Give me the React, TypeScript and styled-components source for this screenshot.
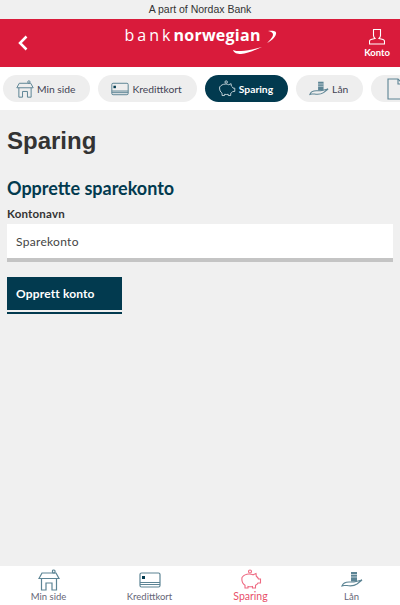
import React from "react";
import styled, { createGlobalStyle } from "styled-components";

const GlobalStyle = createGlobalStyle`
  html, body { margin: 0; padding: 0; height: 100%; background: #f0f0f0; }
  #root { height: 100%; }
  * { box-sizing: border-box; }
`;

const BODY_FONT = `Lato, "Noto Sans", sans-serif`;
const PETROL = "#023a4f";
const ICON = "#5c8494";

type IconProps = { color?: string; size?: number };

const HouseIcon = ({ color = ICON, size = 22 }: IconProps) => (
  <svg width={size} height={size} viewBox="0 0 22 22" fill="none" stroke={color} strokeWidth="1.2">
    <path d="M1 9.5 4 4h14l3 5.5z" />
    <path d="M3.5 9.5V21h4.5v-7h6v7h4.5V9.5" />
    <rect x="14.5" y="1" width="2.5" height="3" rx="1" />
  </svg>
);

const CardIcon = ({ color = ICON, size = 22 }: IconProps) => (
  <svg width={size} height={size} viewBox="0 0 22 22" fill="none" stroke={color} strokeWidth="1.2">
    <rect x="1" y="4" width="20" height="14" rx="1.5" />
    <path d="M1 13.5h20M1 15.5h20" />
    <rect x="3" y="7" width="3" height="3" fill={PETROL} stroke="none" />
  </svg>
);

const PiggyIcon = ({ color = ICON, size = 22 }: IconProps) => (
  <svg width={size} height={size} viewBox="0 0 22 22" fill="none" stroke={color} strokeWidth="1.1">
    <path d="M2 8.5c1.500-2 4-3.500 7-3.500 2 0 3 .3 4 .8L16 4.500l.3 2.800c1 .7 1.800 1.600 2.200 2.700h2v4h-2.500c-.6 1-1.400 1.700-2.500 2.300V19h-3v-1.500c-1.500.3-3 .3-4.500 0V19h-3v-2.800C3 15 1.500 12 2 8.500z" />
    <circle cx="10" cy="2.500" r="1.500" />
  </svg>
);

const LoanIcon = ({ color = ICON, size = 22 }: IconProps) => (
  <svg width={size} height={size} viewBox="0 0 22 22" fill="none" stroke={color} strokeWidth="1.2">
    <path d="M1 17C2 14 5 13 8 13h5l8-2-5 4c-3 2-7 2-10 1.500H3z" />
    <rect x="10" y="3" width="6" height="9.500" fill={color} stroke="none" />
    <path d="M10 5.500h6M10 8h6" stroke="#fff" strokeWidth=".6" />
  </svg>
);

const DocIcon = ({ color = ICON, size = 22 }: IconProps) => (
  <svg width={size} height={size} viewBox="0 0 22 22" fill="none" stroke={color} strokeWidth="1.1">
    <path d="M4 1h10l5 5v15H4z" />
    <path d="M14 1v5h5" />
  </svg>
);

const Page = styled.div`
  display: flex;
  flex-direction: column;
  height: 605px;
  overflow: hidden;
  font-family: ${BODY_FONT};
`;

const TopNotice = styled.div`
  height: 19px;
  line-height: 19px;
  text-align: center;
  font-family: "Liberation Sans", Arial, sans-serif;
  font-size: 10.5px;
  color: #333;
  background: #f0f0f0;
`;

const Header = styled.header`
  height: 48px;
  display: flex;
  align-items: center;
  justify-content: space-between;
  background: #d91b3b;
  color: #fff;
  padding: 0 10px 0 17px;
`;

const Logo = styled.div`
  position: relative;
  width: 155px;
  height: 32px;
  margin: -4px 0 0 11px;
  font-family: "Open Sans", sans-serif;
  font-size: 16px;
  line-height: 20px;
  letter-spacing: 3px;
  white-space: nowrap;
`;

const LogoBold = styled.span`
  font-weight: 700;
  letter-spacing: 0.25px;
`;

const Swoosh = styled.svg`
  position: absolute;
  left: 0;
  top: 0;
`;

const AccountLink = styled.div`
  display: flex;
  flex-direction: column;
  align-items: center;
  gap: 2px;
  font-size: 9.5px;
  font-weight: 700;
  line-height: 11px;
`;

const TabBar = styled.nav`
  height: 43px;
  background: #fff;
  display: flex;
  align-items: center;
  gap: 8px;
  padding: 0 0 0 3px;
  overflow: hidden;
`;

const Tab = styled.div<{ $active?: boolean }>`
  flex: none;
  height: 27px;
  border-radius: 14px;
  padding: 0 15px 0 13px;
  display: flex;
  align-items: center;
  gap: 3px;
  font-size: 10.3px;
  background: ${(p) => (p.$active ? PETROL : "#eeeeee")};
  color: ${(p) => (p.$active ? "#fff" : "#445")};
  font-weight: ${(p) => (p.$active ? 700 : 400)};
`;

const Content = styled.main`
  flex: 1;
  padding: 16px 7px 0;
  background: #f0f0f0;
`;

const PageTitle = styled.h1`
  margin: 0;
  font-family: "Liberation Sans", Arial, sans-serif;
  font-size: 24px;
  line-height: 30px;
  font-weight: 700;
  color: #333;
`;

const SubTitle = styled.h2`
  margin: 21px 0 0;
  font-size: 18px;
  line-height: 22px;
  font-weight: 700;
  color: ${PETROL};
`;

const FieldLabel = styled.label`
  display: block;
  margin-top: 8px;
  font-size: 11.5px;
  line-height: 14px;
  font-weight: 700;
  letter-spacing: 0.2px;
  color: #333;
`;

const TextField = styled.div`
  margin-top: 3px;
  height: 38px;
  background: #fff;
  border-bottom: 4px solid #c4c4c4;
  padding: 0 9px;
  display: flex;
  align-items: center;
  font-size: 12px;
  letter-spacing: 0.3px;
  color: #444;
`;

const PrimaryButton = styled.button`
  display: block;
  margin: 15px 0 0;
  width: 115px;
  height: 33px;
  padding: 0 9px;
  border: 0;
  background: ${PETROL};
  color: #fff;
  font-family: ${BODY_FONT};
  font-size: 12px;
  font-weight: 700;
  letter-spacing: 0.15px;
  text-align: left;
  box-shadow: 0 2px 0 #f0f0f0, 0 4px 0 ${PETROL};
`;

const BottomNav = styled.footer`
  height: 39px;
  background: #fff;
  display: grid;
  grid-template-columns: repeat(4, 101px);
  justify-content: center;
`;

const BottomItem = styled.div<{ $active?: boolean }>`
  display: flex;
  flex-direction: column;
  align-items: center;
  padding-top: 3px;
  font-size: ${(p) => (p.$active ? "10.5px" : "9.5px")};
  line-height: 11px;
  color: ${(p) => (p.$active ? "#e8506a" : "#667")};
`;

const tabs = [
  { label: "Min side", Icon: HouseIcon, size: 18 },
  { label: "Kredittkort", Icon: CardIcon, size: 18 },
  { label: "Sparing", Icon: PiggyIcon, size: 18, active: true },
  { label: "Lån", Icon: LoanIcon, size: 20 },
];

const App = () => (
  <Page>
    <GlobalStyle />
    <TopNotice>A part of Nordax Bank</TopNotice>
    <Header>
      <svg width="12" height="16" viewBox="0 0 12 16" fill="none" stroke="#fff" strokeWidth="2.5">
        <path d="M9.5 1.500 3 8l6.500 6.500" />
      </svg>
      <Logo>
        bank<LogoBold>norwegian</LogoBold>
        <Swoosh width="155" height="32" viewBox="0 0 155 32" fill="#fff">
          <path d="M143 6c5-1 9 0 8 3-1 4-5 7-9 9 3-3 6-6 6-8.500 0-2-2-3-5-3.500z" />
          <path d="M108 25c1 3 4 4 8 4 6 0 14-4 21-7-7 2-15 4-21 4-4 0-6 0-8-1z" />
        </Swoosh>
      </Logo>
      <AccountLink>
        <svg width="16" height="17" viewBox="0 0 16 17" fill="none" stroke="#fff" strokeWidth="1.1">
          <path d="M4.500 1.500h7v6c0 1.500-1 2.500-1.500 3l4 1c.8.2 1.500.8 1.500 1.800V16H.5v-2.700c0-1 .7-1.600 1.500-1.800l4-1C5.500 10 4.500 9 4.500 7.500z" />
        </svg>
        Konto
      </AccountLink>
    </Header>
    <TabBar>
      {tabs.map(({ label, Icon, size, active }) => (
        <Tab key={label} $active={active}>
          <Icon size={size} color={active ? "#cfdde2" : ICON} />
          {label}
        </Tab>
      ))}
      <Tab aria-label="Dokumenter">
        <DocIcon size={22} />
      </Tab>
    </TabBar>
    <Content>
      <PageTitle>Sparing</PageTitle>
      <SubTitle>Opprette sparekonto</SubTitle>
      <FieldLabel>Kontonavn</FieldLabel>
      <TextField>Sparekonto</TextField>
      <PrimaryButton>Opprett konto</PrimaryButton>
    </Content>
    <BottomNav>
      <BottomItem>
        <HouseIcon />
        Min side
      </BottomItem>
      <BottomItem>
        <CardIcon />
        Kredittkort
      </BottomItem>
      <BottomItem $active>
        <PiggyIcon color="#ee6a82" />
        Sparing
      </BottomItem>
      <BottomItem>
        <LoanIcon />
        Lån
      </BottomItem>
    </BottomNav>
  </Page>
);

export default App;
